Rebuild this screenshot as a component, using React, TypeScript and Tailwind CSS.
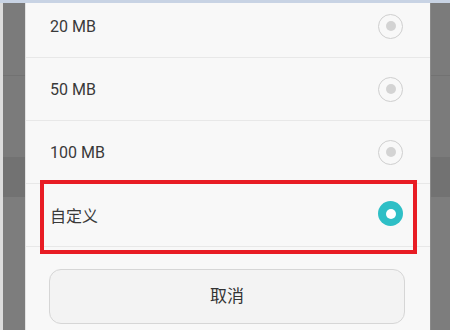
import { Fragment } from 'react';

const options = [
  { label: '20 MB', selected: false },
  { label: '50 MB', selected: false },
  { label: '100 MB', selected: false },
  { label: '自定义', selected: true },
];

function Radio({ selected }: { selected: boolean }) {
  if (selected) {
    return (
      <div className="w-[25px] h-[25px] rounded-full bg-[#2ebfc6] flex items-center justify-center -mt-[3px]">
        <div className="w-[10px] h-[10px] rounded-full bg-white" />
      </div>
    );
  }
  return (
    <div className="w-[25px] h-[25px] rounded-full border border-[#cfcfcf] flex items-center justify-center">
      <div className="w-[10px] h-[10px] rounded-full bg-[#d3d3d3]" />
    </div>
  );
}

function SideStrip({ light }: { light?: boolean }) {
  return (
    <div className="flex h-full">
      {light && <div className="w-[3px] bg-[#dcdcdc]" />}
      <div className="flex-1 flex flex-col">
        <div className="h-[73px] bg-[#7b7b7b] border-b border-[#727272]" />
        <div className="h-[81px] bg-[#7b7b7b]" />
        <div className="h-[40px] bg-[#727272]" />
        <div className="flex-1 bg-[#7d7d7d]" />
      </div>
    </div>
  );
}

export default function App() {
  return (
    <div
      className="w-[450px] h-[330px] relative overflow-hidden flex flex-col bg-[#7b7b7b]"
      style={{ fontFamily: 'Roboto, "Noto Sans CJK SC", sans-serif' }}
    >
      <div className="h-[3px] bg-[#c8d3e4] shrink-0" />
      <div className="flex flex-1 min-h-0">
        <div className="w-[25px] shrink-0">
          <SideStrip light />
        </div>
        <div className="w-[405px] shrink-0 bg-[#f8f8f8] border-l border-[#e2e2e2] flex flex-col">
          <div className="-mt-[8px]">
            {options.map((o) => (
              <Fragment key={o.label}>
                <div className="h-[63px] flex items-center justify-between pl-[24px] pr-[27px] border-b border-[#e8e8e8]">
                  <span className={`text-[16px] text-[#3a3a3a] ${o.selected ? 'mt-[3px]' : 'mt-[1px]'}`}>
                    {o.label}
                  </span>
                  <Radio selected={o.selected} />
                </div>
              </Fragment>
            ))}
          </div>
          <button className="mt-[22px] ml-[23px] mr-[25px] h-[55px] rounded-[12px] border border-[#d6d6d6] bg-[#f3f3f3] text-[17px] text-[#333333] pt-[1px]">
            取消
          </button>
        </div>
        <div className="flex-1 border-l border-[#8a8a8a]">
          <SideStrip />
        </div>
      </div>
      <div className="absolute left-[40px] top-[180px] w-[377px] h-[74px] border-4 border-[#e81c24]" />
    </div>
  );
}
